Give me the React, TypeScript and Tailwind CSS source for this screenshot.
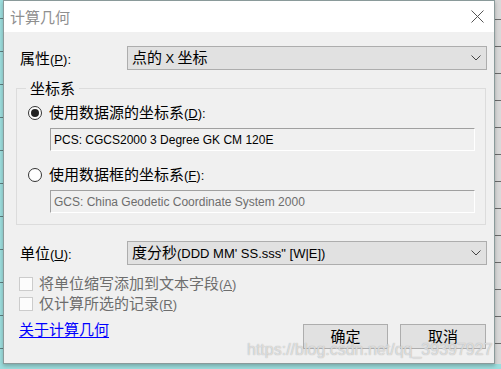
import { ReactNode } from 'react';

const cjk = "font-['Noto_Sans_CJK_SC','Microsoft_YaHei',sans-serif]";
const latin = "font-['Liberation_Sans','Noto_Sans_CJK_SC',sans-serif]";

function Key({ k }: { k: string }) {
  return (
    <span className={`${latin} text-[13px]`}>
      (<u>{k}</u>)
    </span>
  );
}

function Chevron() {
  return (
    <svg width="10" height="6" viewBox="0 0 10 6" className="text-[#444]">
      <path d="M0.5 0.5 L5 5 L9.5 0.5" fill="none" stroke="currentColor" strokeWidth="1" />
    </svg>
  );
}

function Select({ children }: { children: ReactNode }) {
  return (
    <div className="ml-[107px] flex h-[24px] w-[360px] items-center justify-between border border-[#adadad] bg-[#e1e1e1] pl-[4px] pr-[5px]">
      <span className="whitespace-nowrap text-[15px] leading-[20px] text-black">{children}</span>
      <Chevron />
    </div>
  );
}

function Radio({ checked, children }: { checked?: boolean; children: ReactNode }) {
  return (
    <div className="ml-[11px] flex h-[20px] items-center">
      <span className="flex h-[14px] w-[14px] items-center justify-center rounded-full border border-[#333] bg-white">
        {checked && <span className="h-[8px] w-[8px] rounded-full bg-[#222]" />}
      </span>
      <span className="ml-[7px] text-[15px] leading-[20px] text-black">{children}</span>
    </div>
  );
}

function ReadBox({ text, dim }: { text: string; dim?: boolean }) {
  return (
    <div
      className={`ml-[33px] flex h-[23px] w-[425px] items-center border border-t-[#a0a0a0] border-l-[#a0a0a0] border-r-white border-b-white bg-[#f0f0f0] pl-[3px] ${latin} text-[12px] ${dim ? 'text-[#6d6d6d]' : 'text-black'}`}
    >
      {text}
    </div>
  );
}

function Check({ children }: { children: ReactNode }) {
  return (
    <div className="ml-[15px] flex h-[20px] items-center">
      <span className="h-[14px] w-[14px] border border-[#cccccc] bg-[#fcfcfc]" />
      <span className="ml-[6px] text-[15px] leading-[20px] text-[#6d6d6d]">{children}</span>
    </div>
  );
}

export default function App() {
  return (
    <div className={`flex h-[369px] w-[501px] flex-col overflow-hidden bg-[#9ddede] ${cjk}`}>
      <div className="flex h-[364px]">
        <div className="w-[3px] bg-[repeating-linear-gradient(to_bottom,#9ddede_0px,#9ddede_18px,#5d7e7e_18px,#5d7e7e_19px,#9ddede_19px,#9ddede_33px)]" />

        <div className="relative flex w-[492px] flex-col border border-[#8a9a9a] bg-[#f0f0f0] shadow-[0_2px_4px_rgba(0,0,0,0.25)]">
          {/* title bar */}
          <div className="flex h-[31px] items-center justify-between bg-white pl-[6px] pr-[10px]">
            <span className="text-[15px] leading-[20px] text-[#8f8f8f]">计算几何</span>
            <svg width="13" height="13" viewBox="0 0 13 13" className="text-[#555]">
              <path d="M0.5 0.5 L12.5 12.5 M12.5 0.5 L0.5 12.5" stroke="currentColor" strokeWidth="1" />
            </svg>
          </div>

          {/* body */}
          <div className="flex flex-col pt-[14px]">
            <div className="flex h-[24px] items-center">
              <span className="ml-[16px] w-[0px] whitespace-nowrap text-[15px] text-black">
                属性<Key k="P" />
                <span className={`${latin} text-[13px]`}>:</span>
              </span>
              <Select>点的 <span className={`${latin} text-[13px]`}>X</span> 坐标</Select>
            </div>

            <fieldset className="ml-[12px] mt-[8px] w-[470px] border border-[#dcdcdc] pb-[11px]">
              <legend className="ml-[9px] px-[4px] text-[15px] leading-[20px] text-black">坐标系</legend>
              <div className="mt-[5px]">
                <Radio checked>
                  使用数据源的坐标系<Key k="D" />
                  <span className={`${latin} text-[13px]`}>:</span>
                </Radio>
              </div>
              <div className="mt-[5px]">
                <ReadBox text="PCS: CGCS2000 3 Degree GK CM 120E" />
              </div>
              <div className="mt-[14px]">
                <Radio>
                  使用数据框的坐标系<Key k="F" />
                  <span className={`${latin} text-[13px]`}>:</span>
                </Radio>
              </div>
              <div className="mt-[5px]">
                <ReadBox text="GCS: China Geodetic Coordinate System 2000" dim />
              </div>
            </fieldset>

            <div className="mt-[16px] flex h-[24px] items-center">
              <span className="ml-[16px] w-[0px] whitespace-nowrap text-[15px] text-black">
                单位<Key k="U" />
                <span className={`${latin} text-[13px]`}>:</span>
              </span>
              <Select>
                度分秒<span className={`${latin} text-[13px]`}>(DDD MM&apos; SS.sss&quot; [W|E])</span>
              </Select>
            </div>

            <div className="mt-[9px] flex flex-col">
              <Check>
                将单位缩写添加到文本字段<Key k="A" />
              </Check>
              <Check>
                仅计算所选的记录<Key k="R" />
              </Check>
            </div>

            <div className="mt-[5px] flex items-start justify-between pl-[15px] pr-[8px]">
              <span className="text-[15px] leading-[20px] text-[#0000ff] underline underline-offset-2">关于计算几何</span>
              <div className="mt-[5px] flex gap-[12px]">
                <button className="h-[25px] w-[85px] border border-[#adadad] bg-[#e1e1e1] text-[15px] text-black">确定</button>
                <button className="h-[25px] w-[86px] border border-[#adadad] bg-[#e1e1e1] text-[15px] text-black">取消</button>
              </div>
            </div>
          </div>

          <span className="pointer-events-none absolute left-[243px] top-[339px] whitespace-nowrap font-['Liberation_Sans',sans-serif] text-[16px] leading-[20px] text-white/60 [text-shadow:0_0_1px_#9a9a9a]">
            https://blog.csdn.net/qq_39397927
          </span>
        </div>

        <div className="w-[6px] bg-[repeating-linear-gradient(to_bottom,#d9d9d9_0px,#d9d9d9_19px,#6a6a6a_19px,#6a6a6a_20px,#d9d9d9_20px,#d9d9d9_27px)]" />
      </div>
      <div className="flex-1 bg-[#9ddede]" />
    </div>
  );
}
